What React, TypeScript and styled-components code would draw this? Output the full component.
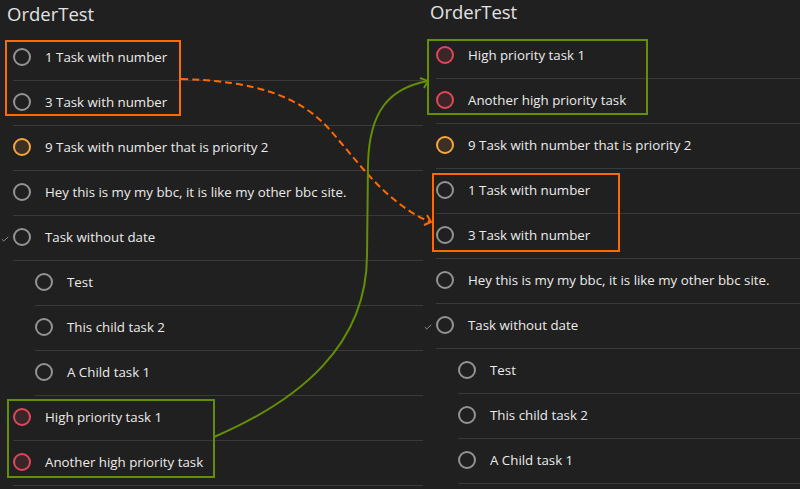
import React from 'react'
import styled, { createGlobalStyle } from 'styled-components'

type Priority = 'none' | 'medium' | 'high'

type Task = {
  text: string,
  priority?: Priority,
  child?: boolean,
  checked?: boolean
}

const GlobalStyle = createGlobalStyle`
  html, body {
    margin: 0;
    padding: 0;
    background: #202020;
  }
  body {
    font-family: 'Open Sans', 'Noto Sans', sans-serif;
  }
`

const Page = styled.div`
  position: relative;
  display: flex;
  width: 800px;
  height: 489px;
  overflow: hidden;
  background: #202020;
  color: #e6e6e6;
`

const Panel = styled.section<{ $width?: number, $shift: number }>`
  display: flex;
  flex-direction: column;
  flex: ${p => (p.$width ? `0 0 ${p.$width}px` : '1')};
  margin-top: ${p => p.$shift}px;
`

const Title = styled.h1`
  margin: 0;
  height: 36px;
  padding: 1px 0 0 7px;
  box-sizing: border-box;
  font-size: 18.5px;
  font-weight: 400;
  line-height: 26px;
  color: #e2e2e2;
`

const List = styled.ul`
  margin: 0;
  padding: 0;
  list-style: none;
`

const Row = styled.li`
  display: flex;
  height: 45px;
`

const Gutter = styled.div<{ $child?: boolean }>`
  flex: 0 0 ${p => (p.$child ? 35 : 13)}px;
  display: flex;
  align-items: center;
  padding-left: 1px;
  box-sizing: border-box;
  color: #8c8c8c;
`

const Body = styled.div`
  flex: 1;
  display: flex;
  align-items: center;
  gap: 14px;
  border-bottom: 1px solid #3a3a3a;
  padding-bottom: 2px;
`

const ringColors: Record<Priority, { ring: string, fill: string }> = {
  none: { ring: '#939393', fill: 'transparent' },
  medium: { ring: '#f5a63c', fill: '#3b3023' },
  high: { ring: '#e04758', fill: '#3a2628' }
}

const Circle = styled.span<{ $priority: Priority }>`
  width: 18px;
  height: 18px;
  box-sizing: border-box;
  border-radius: 50%;
  border: 2px solid ${p => ringColors[p.$priority].ring};
  background: ${p => ringColors[p.$priority].fill};
  flex: 0 0 auto;
`

const Label = styled.span`
  font-size: 13.3px;
  color: #ebebeb;
  white-space: nowrap;
`

const Overlay = styled.svg`
  position: absolute;
  left: 0;
  top: 0;
  pointer-events: none;
`

const Check = () => (
  <svg width='8' height='6' viewBox='0 0 8 6'>
    <path d='M0.8 3.2 L2.8 5 L7.2 0.8' fill='none' stroke='currentColor' strokeWidth='1' />
  </svg>
)

const leftTasks: Task[] = [
  { text: '1 Task with number' },
  { text: '3 Task with number' },
  { text: '9 Task with number that is priority 2', priority: 'medium' },
  { text: 'Hey this is my my bbc, it is like my other bbc site.' },
  { text: 'Task without date', checked: true },
  { text: 'Test', child: true },
  { text: 'This child task 2', child: true },
  { text: 'A Child task 1', child: true },
  { text: 'High priority task 1', priority: 'high' },
  { text: 'Another high priority task', priority: 'high' }
]

const rightTasks: Task[] = [
  { text: 'High priority task 1', priority: 'high' },
  { text: 'Another high priority task', priority: 'high' },
  { text: '9 Task with number that is priority 2', priority: 'medium' },
  { text: '1 Task with number' },
  { text: '3 Task with number' },
  { text: 'Hey this is my my bbc, it is like my other bbc site.' },
  { text: 'Task without date', checked: true },
  { text: 'Test', child: true },
  { text: 'This child task 2', child: true },
  { text: 'A Child task 1', child: true }
]

const TaskList = ({ tasks }: { tasks: Task[] }) => (
  <List>
    {tasks.map((t, i) => (
      <Row key={i}>
        <Gutter $child={t.child}>{t.checked && <Check />}</Gutter>
        <Body>
          <Circle $priority={t.priority ?? 'none'} />
          <Label>{t.text}</Label>
        </Body>
      </Row>
    ))}
  </List>
)

const ORANGE = '#ff6a00'
const GREEN = '#638f00'

const Annotations = () => (
  <Overlay width='800' height='489' viewBox='0 0 800 489'>
    <rect x='6' y='41' width='174' height='74' fill='none' stroke={ORANGE} strokeWidth='2' />
    <rect x='433' y='174' width='186' height='77' fill='none' stroke={ORANGE} strokeWidth='2' />
    <rect x='8' y='400' width='206' height='77' fill='none' stroke={GREEN} strokeWidth='2' />
    <rect x='428' y='40' width='219' height='74' fill='none' stroke={GREEN} strokeWidth='2' />
    <path
      d='M181 79 C 255 81, 300 96, 330 130 S 385 202, 430 222'
      fill='none'
      stroke={ORANGE}
      strokeWidth='2'
      strokeDasharray='7 4'
    />
    <path d='M427 215 L431 222 L424 225' fill='none' stroke={ORANGE} strokeWidth='2' />
    <path
      d='M214 437 C 300 400, 367 345, 367 255 L 368 165 C 369 110, 390 88, 428 81'
      fill='none'
      stroke={GREEN}
      strokeWidth='2'
    />
    <path d='M420 78 L428 81 L424 88' fill='none' stroke={GREEN} strokeWidth='2' />
  </Overlay>
)

const App = () => (
  <Page>
    <GlobalStyle />
    <Panel $width={423} $shift={0}>
      <Title>OrderTest</Title>
      <TaskList tasks={leftTasks} />
    </Panel>
    <Panel $shift={-2}>
      <Title>OrderTest</Title>
      <TaskList tasks={rightTasks} />
    </Panel>
    <Annotations />
  </Page>
)

export default App
